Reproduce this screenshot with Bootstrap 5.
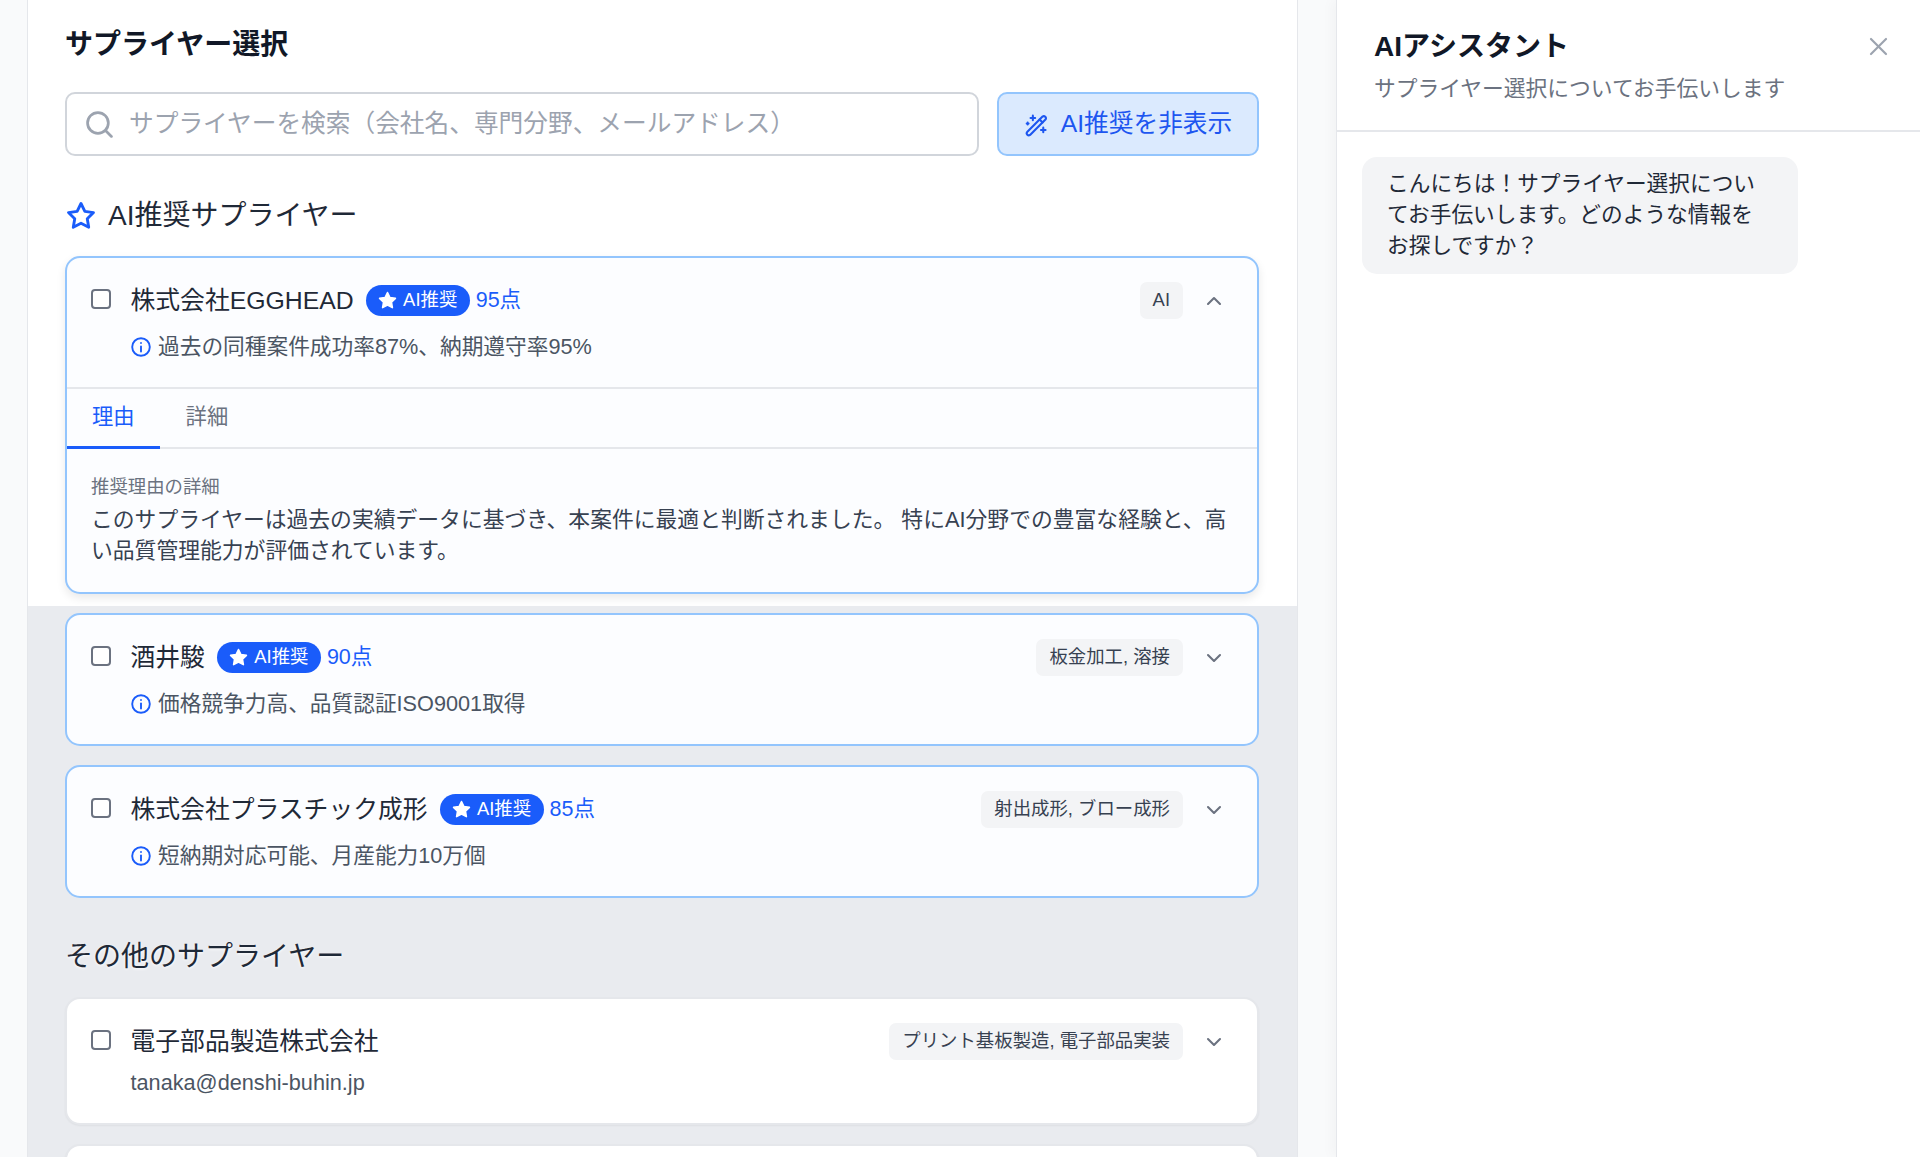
<!DOCTYPE html>
<html lang="ja">
<head>
<meta charset="utf-8">
<title>サプライヤー選択</title>
<link href="https://cdn.jsdelivr.net/npm/bootstrap@5.3.0/dist/css/bootstrap.min.css" rel="stylesheet">
<style>
html,body{height:100%}
body{background:#f9fafb;font-family:"Liberation Sans","Noto Sans CJK JP",sans-serif;color:#111827;overflow:hidden;font-size:21.7px}
.shell{height:1157px}
.mainpane{width:1271px;margin-left:27px;flex:none;padding:25px 38px 0 37px;border-left:1px solid #e5e7eb;border-right:1px solid #e5e7eb;background:linear-gradient(#fff 606px,#e9ebef 606px);overflow:hidden}
.pagehead{font-size:28px;line-height:40px;font-weight:700;margin:0 0 27px;color:#111827}
.searchwrap{flex:1}
.searchwrap svg{position:absolute;left:21px;top:19px;width:27px;height:27px}
.searchbox.form-control{height:64px;padding:0 20px 0 62px;font-size:24.7px;border:2px solid #d1d5db;border-radius:10px;color:#111827}
.searchbox::placeholder{color:#9ca3af}
.aibtn.btn{width:262px;height:64px;flex:none;margin-left:18.5px;background:#dbeafe;border:2px solid #93c5fd;border-radius:10px;color:#1d56f0;font-size:24.7px;padding:0;display:flex;align-items:center;justify-content:center;gap:12px}
.sechead{font-size:28px;line-height:40px;font-weight:400;color:#1f2937;margin:0}
.rechead{margin:39.5px 0 20.5px 1px;gap:12px}
.othershead{margin:38.5px 0 20.5px;text-shadow:0 1px 3px #fff}
.supcard.card{border:2px solid #93c5fd;border-radius:15px;background:#fcfdff;margin-bottom:19px;overflow:hidden;--bs-card-bg:#fcfdff}
.plaincard.card{border-color:#e5e7eb;background:#fff;--bs-card-bg:#fff;box-shadow:0 1px 2px rgba(0,0,0,.05)}
.liftcard.card{box-shadow:0 4px 10px rgba(0,0,0,.09);overflow:visible;margin-bottom:19.5px}
.cardhead{padding:24px 25px 25px 24px;gap:19.5px}
.pick.form-check-input{width:20px;height:20px;margin:7px 0 0;border:2px solid #6b7280;border-radius:4px;flex:none;background-color:#fff}
.toprow{height:37px}
.supname{font-size:24.8px;color:#1f2937;font-weight:400;white-space:nowrap;line-height:38px}
.aipill.badge{background:#1a5cfa;color:#fff;border-radius:16px;height:31px;width:104px;margin-left:12px;font-size:18.4px;font-weight:400;padding:0;display:flex;align-items:center;justify-content:center;gap:6px}
.points{font-size:21.5px;color:#1a5cfa;margin-left:6px;white-space:nowrap}
.tagchip.badge{background:#f3f4f6;color:#374151;font-size:18.4px;font-weight:400;height:37px;padding:0 13px;border-radius:7px;display:flex;align-items:center}
.chevbox{width:36px;height:37px;margin-left:13px;flex:none}
.inforow{font-size:21.7px;line-height:31px;color:#4b5563;margin-top:12px;gap:7.5px}
.mailrow{font-size:21.7px;line-height:31px;color:#4b5563;margin:7px 0 0}
.tabbar.nav{border-top:2px solid #e5e7eb;border-bottom:2px solid #e5e7eb;height:62px;gap:1px;flex-wrap:nowrap}
.tabbar .nav-link{padding:0 25px;height:60px;font-size:21.3px;line-height:56px;color:#6b7280;border-radius:0;border-bottom:3px solid transparent}
.tabbar .nav-link.active{color:#1a5cfa;border-bottom-color:#1a5cfa}
.detailbox{padding:23.5px 24px 26px}
.detaillabel{font-size:18.4px;line-height:27px;color:#6b7280;margin-top:0}
.detailtext{font-size:21.8px;line-height:31px;color:#374151;margin:4px 0 0}
.sidepane{width:584px;margin-left:38px;flex:none;background:#fff;border-left:1px solid #e5e7eb;box-shadow:-4px 0 12px rgba(0,0,0,.03)}
.sidehead{height:132px;padding:27px 32.5px 0 37px;border-bottom:2px solid #e5e7eb}
.sidetitle{font-size:28px;line-height:40px;font-weight:700;color:#111827;margin:0}
.sidesub{font-size:21.75px;line-height:32px;color:#6b7280;margin:5.5px 0 0}
.closebtn{background:none;border:0;padding:0;width:19px;height:19px;margin-top:10px;line-height:0}
.chatzone{padding:25px 25px}
.bubble{width:436px;padding:11px 25px 13px;background:#f3f4f6;border-radius:15px;font-size:21.7px;line-height:31px;color:#1f2937}
</style>
</head>
<body>
<div class="shell d-flex">
  <main class="mainpane">
    <h1 class="pagehead">サプライヤー選択</h1>
    <div class="d-flex">
      <div class="searchwrap position-relative">
        <svg viewBox="0 0 26 26" fill="none" stroke="#9ca3af" stroke-width="2.6" stroke-linecap="round"><circle cx="11.5" cy="11.5" r="10"/><line x1="19" y1="19" x2="24.5" y2="24.5"/></svg>
        <input class="form-control searchbox" type="text" placeholder="サプライヤーを検索（会社名、専門分野、メールアドレス）">
      </div>
      <button class="btn aibtn" type="button">
        <svg width="25" height="25" viewBox="0 0 24 24" fill="none" stroke="#1d56f0" stroke-width="2" stroke-linecap="round" stroke-linejoin="round"><path d="M3 19.2 17.8 4.4a2 2 0 0 1 2.8 2.8L5.8 22a2 2 0 0 1-2.8-2.8Z"/><path d="m15 7.2 2.8 2.8"/><path d="M8.5 3.5v4.4M6.3 5.7h4.4M3.5 10.2v1.8M2.6 11.1h1.8M18.5 15v4.4M16.3 17.2h4.4"/></svg>
        <span>AI推奨を非表示</span>
      </button>
    </div>

    <h2 class="sechead rechead d-flex align-items-center">
      <svg width="30" height="30" viewBox="0 0 24 24" fill="none" stroke="#1a5cfa" stroke-width="2.3" stroke-linejoin="round"><polygon points="12 2 15.09 8.26 22 9.27 17 14.14 18.18 21.02 12 17.77 5.82 21.02 7 14.14 2 9.27 8.91 8.26"/></svg>
      <span>AI推奨サプライヤー</span>
    </h2>

    <div class="card supcard liftcard">
      <div class="cardhead d-flex align-items-start">
        <input class="form-check-input pick" type="checkbox" aria-label="株式会社EGGHEAD">
        <div class="flex-fill">
          <div class="toprow d-flex align-items-center">
            <span class="supname">株式会社EGGHEAD</span>
            <span class="badge aipill"><svg width="19" height="19" viewBox="0 0 24 24" fill="#fff" stroke="#fff" stroke-width="2" stroke-linejoin="round"><polygon points="12 2 15.09 8.26 22 9.27 17 14.14 18.18 21.02 12 17.77 5.82 21.02 7 14.14 2 9.27 8.91 8.26"/></svg>AI推奨</span>
            <span class="points">95点</span>
            <span class="badge tagchip ms-auto">AI</span>
            <span class="chevbox d-flex align-items-center justify-content-center"><svg width="16" height="10" viewBox="0 0 16 10" fill="none" stroke="#6b7280" stroke-width="2.1" stroke-linecap="round" stroke-linejoin="round"><polyline points="2 8 8 2 14 8"/></svg></span>
          </div>
          <div class="inforow d-flex align-items-center">
            <svg width="20" height="20" viewBox="0 0 20 20" fill="none" stroke="#1a5cfa" stroke-width="1.9" stroke-linecap="round"><circle cx="10" cy="10" r="8.8"/><line x1="10" y1="9.5" x2="10" y2="14.5"/><line x1="10" y1="5.9" x2="10" y2="6"/></svg>
            <span>過去の同種案件成功率87%、納期遵守率95%</span>
          </div>
        </div>
      </div>
      <ul class="nav tabbar">
        <li class="nav-item"><a class="nav-link active" href="#">理由</a></li>
        <li class="nav-item"><a class="nav-link" href="#">詳細</a></li>
      </ul>
      <div class="detailbox">
        <div class="detaillabel">推奨理由の詳細</div>
        <p class="detailtext">このサプライヤーは過去の実績データに基づき、本案件に最適と判断されました。 特にAI分野での豊富な経験と、高い品質管理能力が評価されています。</p>
      </div>
    </div>

    <div class="card supcard">
      <div class="cardhead d-flex align-items-start">
        <input class="form-check-input pick" type="checkbox" aria-label="酒井駿">
        <div class="flex-fill">
          <div class="toprow d-flex align-items-center">
            <span class="supname">酒井駿</span>
            <span class="badge aipill"><svg width="19" height="19" viewBox="0 0 24 24" fill="#fff" stroke="#fff" stroke-width="2" stroke-linejoin="round"><polygon points="12 2 15.09 8.26 22 9.27 17 14.14 18.18 21.02 12 17.77 5.82 21.02 7 14.14 2 9.27 8.91 8.26"/></svg>AI推奨</span>
            <span class="points">90点</span>
            <span class="badge tagchip ms-auto">板金加工, 溶接</span>
            <span class="chevbox d-flex align-items-center justify-content-center"><svg width="16" height="10" viewBox="0 0 16 10" fill="none" stroke="#6b7280" stroke-width="2.1" stroke-linecap="round" stroke-linejoin="round"><polyline points="2 2 8 8 14 2"/></svg></span>
          </div>
          <div class="inforow d-flex align-items-center">
            <svg width="20" height="20" viewBox="0 0 20 20" fill="none" stroke="#1a5cfa" stroke-width="1.9" stroke-linecap="round"><circle cx="10" cy="10" r="8.8"/><line x1="10" y1="9.5" x2="10" y2="14.5"/><line x1="10" y1="5.9" x2="10" y2="6"/></svg>
            <span>価格競争力高、品質認証ISO9001取得</span>
          </div>
        </div>
      </div>
    </div>

    <div class="card supcard">
      <div class="cardhead d-flex align-items-start">
        <input class="form-check-input pick" type="checkbox" aria-label="株式会社プラスチック成形">
        <div class="flex-fill">
          <div class="toprow d-flex align-items-center">
            <span class="supname">株式会社プラスチック成形</span>
            <span class="badge aipill"><svg width="19" height="19" viewBox="0 0 24 24" fill="#fff" stroke="#fff" stroke-width="2" stroke-linejoin="round"><polygon points="12 2 15.09 8.26 22 9.27 17 14.14 18.18 21.02 12 17.77 5.82 21.02 7 14.14 2 9.27 8.91 8.26"/></svg>AI推奨</span>
            <span class="points">85点</span>
            <span class="badge tagchip ms-auto">射出成形, ブロー成形</span>
            <span class="chevbox d-flex align-items-center justify-content-center"><svg width="16" height="10" viewBox="0 0 16 10" fill="none" stroke="#6b7280" stroke-width="2.1" stroke-linecap="round" stroke-linejoin="round"><polyline points="2 2 8 8 14 2"/></svg></span>
          </div>
          <div class="inforow d-flex align-items-center">
            <svg width="20" height="20" viewBox="0 0 20 20" fill="none" stroke="#1a5cfa" stroke-width="1.9" stroke-linecap="round"><circle cx="10" cy="10" r="8.8"/><line x1="10" y1="9.5" x2="10" y2="14.5"/><line x1="10" y1="5.9" x2="10" y2="6"/></svg>
            <span>短納期対応可能、月産能力10万個</span>
          </div>
        </div>
      </div>
    </div>

    <h2 class="sechead othershead">その他のサプライヤー</h2>

    <div class="card supcard plaincard">
      <div class="cardhead d-flex align-items-start">
        <input class="form-check-input pick" type="checkbox" aria-label="電子部品製造株式会社">
        <div class="flex-fill">
          <div class="toprow d-flex align-items-center">
            <span class="supname">電子部品製造株式会社</span>
            <span class="badge tagchip ms-auto">プリント基板製造, 電子部品実装</span>
            <span class="chevbox d-flex align-items-center justify-content-center"><svg width="16" height="10" viewBox="0 0 16 10" fill="none" stroke="#6b7280" stroke-width="2.1" stroke-linecap="round" stroke-linejoin="round"><polyline points="2 2 8 8 14 2"/></svg></span>
          </div>
          <div class="mailrow">tanaka@denshi-buhin.jp</div>
        </div>
      </div>
    </div>
    <div class="card supcard plaincard"><div class="cardhead"></div><div class="cardhead"></div></div>
  </main>

  <aside class="sidepane">
    <div class="sidehead d-flex justify-content-between align-items-start">
      <div>
        <h3 class="sidetitle">AIアシスタント</h3>
        <p class="sidesub">サプライヤー選択についてお手伝いします</p>
      </div>
      <button class="closebtn" type="button" aria-label="閉じる"><svg width="19" height="19" viewBox="0 0 19 19" fill="none" stroke="#9ca3af" stroke-width="2.2" stroke-linecap="round"><line x1="2" y1="2" x2="17" y2="17"/><line x1="17" y1="2" x2="2" y2="17"/></svg></button>
    </div>
    <div class="chatzone">
      <div class="bubble">こんにちは！サプライヤー選択についてお手伝いします。どのような情報をお探しですか？</div>
    </div>
  </aside>
</div>
<script src="https://cdn.jsdelivr.net/npm/bootstrap@5.3.0/dist/js/bootstrap.bundle.min.js"></script>
</body>
</html>
